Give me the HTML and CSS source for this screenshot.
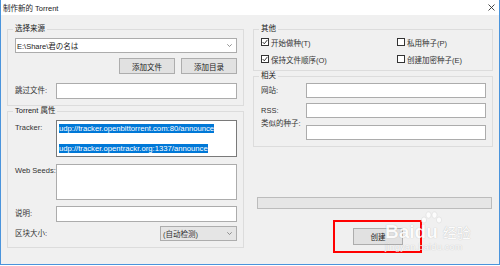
FILE: index.html
```html
<!DOCTYPE html>
<html lang="zh-CN">
<head>
    <meta charset="UTF-8">
    <title>制作新的 Torrent</title>
    <link rel="stylesheet" href="styles.css">
</head>
<body>
    <div class="window">
        <div class="titlebar">
            <span>制作新的 Torrent</span>
            <svg class="close" width="7" height="7" viewBox="0 0 7 7">
                <path d="M0.5 0.5 L6.5 6.5 M6.5 0.5 L0.5 6.5" stroke="#333" stroke-width="0.9"/>
            </svg>
        </div>

        <div class="content">
            <div class="col col-left">
                <fieldset class="group source">
                    <legend>选择来源</legend>
                    <div class="combo">
                        <span>E:\Share\君の名は</span>
                        <svg class="chev" width="5" height="3" viewBox="0 0 5 3"><polyline points="0.3,0.3 2.5,2.5 4.7,0.3" fill="none" stroke="#777" stroke-width="0.8"/></svg>
                    </div>
                    <div class="btn-row">
                        <button class="btn">添加文件</button>
                        <button class="btn">添加目录</button>
                    </div>
                    <div class="field-row skip-row">
                        <label>跳过文件:</label>
                        <div class="input"></div>
                    </div>
                </fieldset>

                <fieldset class="group props">
                    <legend>Torrent 属性</legend>
                    <div class="field-row top tracker-row">
                        <label>Tracker:</label>
                        <div class="input textarea tracker">
                            <div class="line"><span class="sel">udp://tracker.openbittorrent.com:80/announce</span></div>
                            <div class="line second"><span class="sel">udp://tracker.opentrackr.org:1337/announce</span></div>
                        </div>
                    </div>
                    <div class="field-row top seeds-row">
                        <label>Web Seeds:</label>
                        <div class="input textarea seeds"></div>
                    </div>
                    <div class="field-row note-row">
                        <label>说明:</label>
                        <div class="input"></div>
                    </div>
                    <div class="piece-row">
                        <label>区块大小:</label>
                        <div class="select">
                            <span>(自动检测)</span>
                            <svg class="chev" width="5" height="3" viewBox="0 0 5 3"><polyline points="0.3,0.3 2.5,2.5 4.7,0.3" fill="none" stroke="#777" stroke-width="0.8"/></svg>
                        </div>
                    </div>
                </fieldset>
            </div>

            <div class="col col-right">
                <fieldset class="group other">
                    <legend>其他</legend>
                    <div class="checks">
                        <div class="check"><span class="box checked"><svg width="6" height="6" viewBox="0 0 6 6"><polyline points="0.6,3 2.3,4.8 5.4,0.9" fill="none" stroke="#222" stroke-width="0.9"/></svg></span>开始做种(T)</div>
                        <div class="check"><span class="box"></span>私用种子(P)</div>
                        <div class="check"><span class="box checked"><svg width="6" height="6" viewBox="0 0 6 6"><polyline points="0.6,3 2.3,4.8 5.4,0.9" fill="none" stroke="#222" stroke-width="0.9"/></svg></span>保持文件顺序(O)</div>
                        <div class="check"><span class="box"></span>创建加密种子(E)</div>
                    </div>
                </fieldset>

                <fieldset class="group related">
                    <legend>相关</legend>
                    <div class="field-row site-row">
                        <label>网站:</label>
                        <div class="input"></div>
                    </div>
                    <div class="field-row rss-row">
                        <label>RSS:</label>
                        <div class="input"></div>
                    </div>
                    <div class="field-row top similar-row">
                        <label>类似的种子:</label>
                        <div class="input"></div>
                    </div>
                </fieldset>

                <div class="progress"></div>

                <div class="create-frame">
                    <button class="btn create">创建</button>
                </div>
            </div>
        </div>

        <!-- watermark from the source screenshot -->
        <div class="watermark">
            <svg class="paw" width="24" height="14" viewBox="0 0 24 14">
                <ellipse cx="5" cy="9" rx="2.6" ry="3" fill="#fff" stroke="#d8d8d8" stroke-width="0.6"/>
                <ellipse cx="9.5" cy="4" rx="2.6" ry="3.2" fill="#fff" stroke="#d8d8d8" stroke-width="0.6"/>
                <ellipse cx="15.5" cy="4" rx="2.6" ry="3.2" fill="#fff" stroke="#d8d8d8" stroke-width="0.6"/>
                <ellipse cx="20" cy="9" rx="2.6" ry="3" fill="#fff" stroke="#d8d8d8" stroke-width="0.6"/>
            </svg>
            <div class="wm-main">Baidu<span class="wm-cn">经验</span></div>
            <div class="wm-url">jingyan.baidu.com</div>
        </div>
    </div>
</body>
</html>
```

FILE: styles.css
```css
body {
    margin: 0;
    background: #ffffff;
    font-family: "Liberation Sans", "Noto Sans CJK SC", sans-serif;
    font-size: 7.5px;
    color: #222222;
}
.window {
    position: relative;
    width: 500px;
    height: 265px;
    box-sizing: border-box;
    border: 1px solid #4a94dc;
    border-top: none;
    background: #f0f0f0;
    display: flex;
    flex-direction: column;
    overflow: hidden;
}
.titlebar {
    flex: none;
    height: 15px;
    background: #ffffff;
    display: flex;
    align-items: center;
    justify-content: space-between;
    padding: 0 4px 0 2px;
    color: #1a1a1a;
}
.content {
    display: flex;
    gap: 9px;
    padding: 9px 6px 0 6px;
}
.col {
    display: flex;
    flex-direction: column;
}
.col-left {
    width: 237px;
}
.col-right {
    width: 240px;
}
fieldset.group {
    margin: 0;
    padding: 0 6px 6px 7px;
    border: 1px solid #dcdcdc;
    min-width: 0;
}
legend {
    padding: 0 2px;
    margin-left: -2px;
    line-height: 10px;
}
label {
    color: #333333;
    line-height: 10px;
}
.combo {
    margin-top: 4px;
    height: 15px;
    box-sizing: border-box;
    border: 1px solid #acacac;
    background: #ffffff;
    display: flex;
    align-items: center;
    justify-content: space-between;
    padding: 0 4px 0 1px;
}
.btn-row {
    margin-top: 5px;
    display: flex;
    justify-content: flex-end;
    gap: 6px;
}
.btn {
    height: 16px;
    width: 56px;
    padding: 0;
    border: 1px solid #adadad;
    background: #e1e1e1;
    font: inherit;
    color: #222222;
}
.field-row {
    display: grid;
    grid-template-columns: 41px 1fr;
    align-items: center;
}
.field-row.top {
    align-items: start;
}
.input {
    height: 16px;
    box-sizing: border-box;
    border: 1px solid #acacac;
    background: #ffffff;
}
.skip-row {
    margin-top: 9px;
}
.props {
    margin-top: 7px;
}
.tracker-row {
    margin-top: 4px;
}
.tracker-row label {
    margin-top: 3px;
}
.tracker {
    height: 37px;
    border-color: #7a7a7a;
    padding: 3px 0 0 2px;
    font-size: 7.7px;
    line-height: 9.75px;
    white-space: nowrap;
    overflow: hidden;
}
.tracker .second {
    margin-top: 9.75px;
}
.sel {
    background: #0078d7;
    color: #ffffff;
}
.seeds-row {
    margin-top: 7px;
}
.seeds-row label {
    margin-top: 2px;
}
.seeds {
    height: 36px;
}
.note-row {
    margin-top: 6px;
}
.piece-row {
    margin-top: 4px;
    display: flex;
    align-items: center;
    justify-content: space-between;
}
.select {
    width: 77px;
    height: 15px;
    box-sizing: border-box;
    border: 1px solid #adadad;
    background: #e5e5e5;
    display: flex;
    align-items: center;
    justify-content: space-between;
    padding: 0 4px 0 2px;
    color: #333333;
}
.other {
    margin-right: 4px;
    padding: 0 4px 4px 5px;
}
.checks {
    margin-top: 3px;
    display: grid;
    grid-template-columns: 136px 1fr;
    row-gap: 7px;
}
.check {
    height: 10px;
    display: flex;
    align-items: center;
    gap: 2px;
    color: #333333;
}
.box {
    width: 8px;
    height: 8px;
    box-sizing: border-box;
    border: 1px solid #333333;
    background: #ffffff;
    display: flex;
    align-items: center;
    justify-content: center;
}
.related {
    margin-top: 6px;
    padding: 0 8px 4px 4px;
}
.related .field-row {
    grid-template-columns: 45px 1fr;
}
.related .input {
    height: 15px;
}
.site-row {
    margin-top: 2px;
}
.rss-row {
    margin-top: 5px;
}
.similar-row {
    margin-top: 1px;
}
.similar-row .input {
    margin-top: 6px;
}
.progress {
    margin: 50px 1px 0 4px;
    height: 12px;
    box-sizing: border-box;
    border: 1px solid #bcbcbc;
    background: #e6e6e6;
}
.create-frame {
    align-self: flex-start;
    margin: 11px 0 0 80px;
    border: 2px solid #ff0000;
    padding: 6px 17px 6px 18px;
}
.create {
    width: 50px;
    height: 17px;
}
.watermark {
    position: absolute;
    left: 384px;
    top: 211px;
    color: #ffffff;
    font-family: "Liberation Sans", sans-serif;
    text-shadow: 0 0 1px rgba(0, 0, 0, 0.3);
    opacity: 0.85;
}
.paw {
    display: block;
    margin-left: 34px;
}
.wm-main {
    margin-top: -3px;
    font-size: 19px;
    font-weight: bold;
    line-height: 20px;
}
.wm-cn {
    margin-left: 5px;
    font-family: "Noto Sans CJK SC", sans-serif;
    font-size: 14px;
    font-weight: normal;
}
.wm-url {
    font-size: 9px;
    line-height: 10px;
    letter-spacing: 0.3px;
}
```
